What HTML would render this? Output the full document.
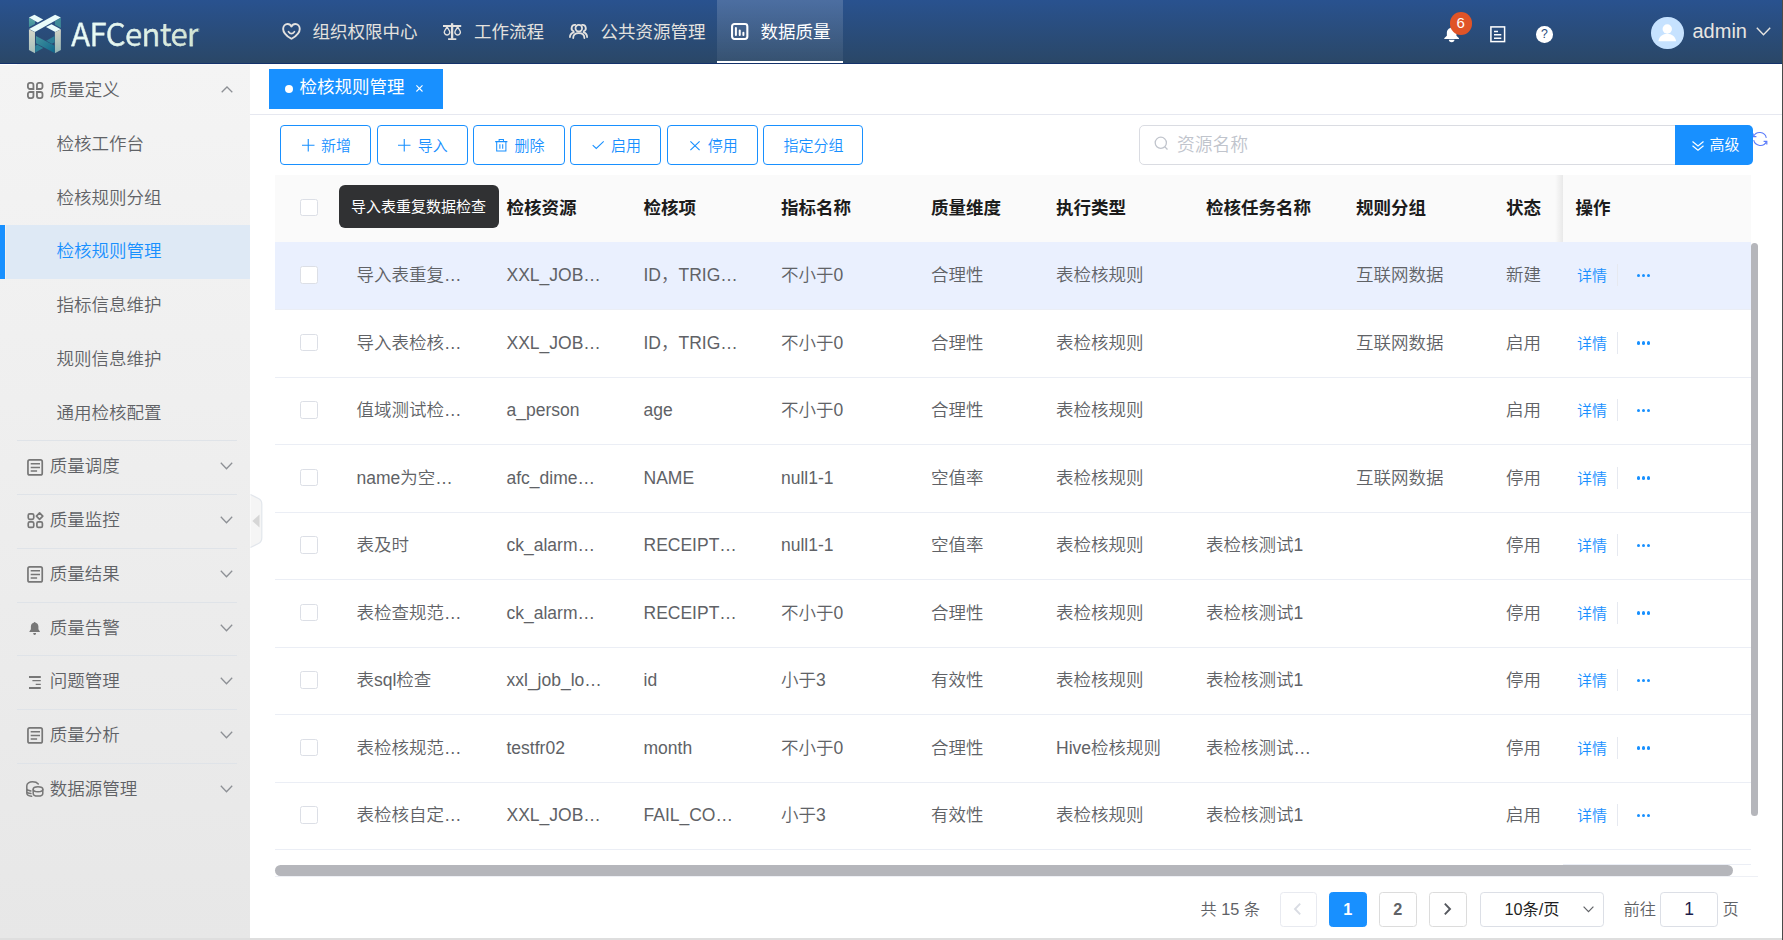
<!DOCTYPE html>
<html lang="zh-CN">
<head>
<meta charset="utf-8">
<title>AFCenter</title>
<style>
*{box-sizing:border-box;margin:0;padding:0}
html,body{width:1783px;height:940px;overflow:hidden;background:#fff}
body{position:relative;font-family:"Liberation Sans","Noto Sans CJK SC",sans-serif;font-size:17.5px;color:#606266;font-weight:350}
.abs{position:absolute}
svg{display:block;overflow:visible}
/* header */
#hd{position:absolute;left:0;top:0;width:1783px;height:64px;background:linear-gradient(#29528f,#2a4767);border-bottom:1px solid #14326b}
#logo{position:absolute;left:24px;top:10px;width:44px;height:48px}
#brand{position:absolute;left:71.2px;top:9px;font-family:"Noto Sans CJK SC","Liberation Sans",sans-serif;font-size:31.2px;line-height:48px;color:transparent;background:linear-gradient(90deg,#ecfdfa 0%,#e3f5ee 45%,#d3e3cd 100%);-webkit-background-clip:text;background-clip:text;letter-spacing:-.5px;white-space:nowrap;-webkit-text-stroke:.35px #e2f2ea}
.nav{position:absolute;top:0;height:63px;color:#e4e2df;font-size:17.5px;line-height:65px;white-space:nowrap;font-weight:400}
.nav svg{position:absolute}
.nav span{position:absolute;top:0}
.nav.on{background:linear-gradient(rgba(255,255,255,.165),rgba(255,255,255,.06));color:#fff;border-bottom:2px solid #fff}
/* sidebar */
#sb{position:absolute;left:0;top:64px;width:250px;height:876px;background:linear-gradient(#f4f4f4,#e7e7e7);color:#606266}
.m1{position:absolute;left:0;width:250px;height:53.75px}
.m1 .t{position:absolute;left:49.7px;top:0;line-height:52px;font-size:17.5px;color:#606266;white-space:nowrap}
.m1 svg.ic{position:absolute;left:26.8px}
.m1 svg.ar{position:absolute;left:220px}
.m1 .ln{position:absolute;left:17px;width:220px;top:0;height:1px;background:#dfe3e8}
.m2{position:absolute;left:0;width:250px;height:53.75px;line-height:52px;padding-left:56.5px;font-size:17.5px;color:#606266;white-space:nowrap}
.m2.on{background:linear-gradient(90deg,#1890ff 0,#1890ff 5px,transparent 5px,transparent 6px,#dee9f5 6px);color:#1890ff}
/* main */
#tab{position:absolute;left:269px;top:69px;width:174px;height:40px;background:#1890ff;color:#fff;font-size:17.5px;line-height:37.6px;white-space:nowrap;font-weight:400}
.btn{position:absolute;top:125px;height:40px;border:1.25px solid #1890ff;border-radius:4px;background:#fff;color:#1890ff;font-size:15px;line-height:38px;white-space:nowrap}
.btn span{position:absolute;top:.7px}
.btn svg{position:absolute}
/* table */
#th{position:absolute;left:275px;top:175px;width:1476px;height:67px;background:#fafafa}
.h{position:absolute;top:0;line-height:67px;font-weight:bold;color:#1c1c1c;font-size:17.5px;white-space:nowrap}
.row{position:absolute;left:275px;width:1476px;height:67.5px;border-bottom:1px solid #ebeef5}
.ri{position:absolute;left:0;width:1476px;height:67.5px}
.row.hv{background:#eaf0fe}
.c{position:absolute;top:0;line-height:67px;font-size:17.5px;color:#606266;white-space:nowrap}
.cb{position:absolute;left:25.25px;width:17.5px;height:17.5px;border:1.25px solid #dcdfe6;border-radius:2.5px;background:#fff}
.lk{position:absolute;left:1302px;top:0;line-height:67px;font-size:15px;color:#1890ff}
.dv{position:absolute;left:1342px;top:22px;width:1px;height:22px;background:#e6e9f0}
.dots{position:absolute;left:1361.5px;top:31.8px;width:14px;height:3.4px}
.dots i{position:absolute;top:0;width:3.4px;height:3.4px;border-radius:50%;background:#1890ff}
/* pagination */
.pg{position:absolute;top:892px;height:35px;line-height:35px;font-size:16.25px;color:#606266;white-space:nowrap}
.pb{position:absolute;top:892px;height:35px;width:37.5px;border:1.25px solid #dcdcdc;border-radius:3.5px;background:#fff;text-align:center;line-height:33px;font-weight:bold;font-size:16.25px;color:#606266}
</style>
</head>
<body>
<div id="hd">
<svg id="logo" viewBox="0 0 862 940">
<defs>
<linearGradient id="gp" x1="0" y1="0" x2="0" y2="1"><stop offset="0" stop-color="#d7d7c9"/><stop offset="1" stop-color="#a6bfbc"/></linearGradient>
<linearGradient id="gp2" x1="0" y1="0" x2="0" y2="1"><stop offset="0" stop-color="#d2d3c5"/><stop offset="1" stop-color="#93b5b5"/></linearGradient>
<linearGradient id="gt" x1="0" y1="0" x2="1" y2="1"><stop offset="0" stop-color="#45949f"/><stop offset="1" stop-color="#0d668b"/></linearGradient>
<linearGradient id="gs" x1="0" y1="0" x2="0" y2="1"><stop offset="0" stop-color="#5aa7a8"/><stop offset="1" stop-color="#3f8d99"/></linearGradient>
</defs>
<polygon points="97,152 215,215 215,272 97,337" fill="url(#gs)"/>
<polygon points="722,152 605,215 605,290 722,352" fill="#3f8b98"/>
<polygon points="97,148 205,92 375,185 270,245" fill="#e9fbfa"/>
<polygon points="540,278 720,375 612,432 430,335" fill="#e9fbfa"/>
<polygon points="610,92 722,148 215,432 100,372" fill="#e9fbfa"/>
<polygon points="97,375 215,435 215,845 97,785" fill="url(#gp)"/>
<polygon points="605,435 722,378 722,785 605,845" fill="url(#gp2)"/>
<polygon points="600,508 600,632 545,662 435,600" fill="#2b7d96"/>
<polygon points="220,702 265,680 378,742 220,832" fill="#2d8199"/>
<polygon points="235,508 600,700 600,842 235,652" fill="url(#gt)"/>
</svg>
<div id="brand">AFCenter</div>

<div class="nav" style="left:270px;width:161px">
<svg style="left:12px;top:23px" width="19" height="17" viewBox="0 0 19 17" fill="none" stroke="#e4e2df" stroke-width="1.900" stroke-linecap="round" stroke-linejoin="round"><path d="M9.450 15.800C7.500 14.600 1.150 11.200 1.150 5.900 1.150 3.100 3.200.950 5.600.950 7.300.950 8.700 1.900 9.450 3.500 10.200 1.900 11.600.950 13.300.950 15.700.950 17.750 3.100 17.750 5.900 17.750 11.200 11.400 14.600 9.450 15.800z"/><path d="M6.500 8.700Q9.450 12.600 12.400 8.700" stroke-width="1.700"/></svg>
<span style="left:42.500px">组织权限中心</span></div>

<div class="nav" style="left:431px;width:126px">
<svg style="left:12.100px;top:23px" width="18.500" height="17" viewBox="0 0 18.500 17" fill="none" stroke="#e4e2df" stroke-linejoin="round"><path d="M9.100.200V15.800" stroke-width="2.300"/><path d="M0 3H18.200M5.100 16.100H13.300" stroke-width="1.800"/><path d="M4.050 3.900L1.600 8A2.750 2.750 0 1 0 6.500 8zM14.650 3.900L12.200 8A2.750 2.750 0 1 0 17.100 8z" stroke-width="1.400"/></svg>
<span style="left:43px">工作流程</span></div>

<div class="nav" style="left:557px;width:160px">
<svg style="left:12px;top:24px" width="19.600" height="15" viewBox="0 0 19.600 15" fill="none" stroke="#e4e2df" stroke-width="1.800" stroke-linecap="round" stroke-linejoin="round"><circle cx="9.800" cy="4.200" r="3.300"/><path d="M4.200 14C4.200 10.400 6.500 9.200 9.800 9.200S15.400 10.400 15.400 14"/><path d="M6.300.950A3.300 3.300 0 0 0 4.700 7.300M.950 13C1 10.700 2.500 9 4.800 8.300M13.100.950A3.300 3.300 0 0 1 14.700 7.300M18.100 13C18.050 10.700 16.700 9 14.600 8.300"/></svg>
<span style="left:43.500px">公共资源管理</span></div>

<div class="nav on" style="left:717px;width:126px">
<svg style="left:14.200px;top:23px" width="17.400" height="17" viewBox="0 0 17.400 17" fill="none" stroke="#fff" stroke-width="2.100" stroke-linejoin="round"><rect x="1.050" y="1.050" width="15.300" height="14.900" rx="2.400"/><path d="M4.900 4.900V11.900M8.750 7.400V11.900M12.400 9.800V11.900" stroke-width="2" stroke-linecap="round"/></svg>
<span style="left:43.500px">数据质量</span></div>

<!-- right tools -->
<svg class="abs" style="left:1443.700px;top:27.200px" width="15.300" height="15.300" viewBox="0 0 15.300 15.300" fill="#fff"><path d="M7.650 0c.6 0 1 .4 1.100.900 2.300.500 3.700 2.400 3.700 4.700v3.200l2.400 2.200c.4.400.2 1-.4 1H.850c-.6 0-.8-.6-.4-1l2.400-2.200V5.600c0-2.300 1.400-4.200 3.700-4.700.1-.5.5-.9 1.100-.9z"/><path d="M4.800 12.800h5.700c0 1.500-1.200 2.500-2.850 2.500S4.800 14.300 4.800 12.800z"/></svg>
<div class="abs" style="left:1449.500px;top:12px;width:22.500px;height:22.500px;border-radius:50%;background:#e05427;color:#fff;font-size:15px;line-height:21.5px;text-align:center">6</div>
<svg class="abs" style="left:1490px;top:26px" width="15.500" height="16.500" viewBox="0 0 15.500 16.500" fill="none" stroke="#fff" stroke-width="1.500"><rect x=".9" y=".9" width="13.700" height="14.700"/><path d="M4 5.400h4M4 8.800h7.300M4 12.200h7.300" stroke-width="1.500"/></svg>
<div class="abs" style="left:1536.200px;top:26px;width:16.600px;height:16.600px;border-radius:50%;background:#fff;color:#2a4a7a;font-size:12.300px;line-height:17.200px;text-align:center;font-weight:400">?</div>
<div class="abs" style="left:1651px;top:16.500px;width:32.500px;height:32.500px;border-radius:50%;background:#c6e2ff;overflow:hidden">
<svg width="32.500" height="32.500" viewBox="0 0 32.500 32.500" fill="#fff"><circle cx="16.250" cy="12" r="4.700"/><path d="M7.400 24.300c.8-4.700 4.200-7.500 8.850-7.500s8.050 2.800 8.850 7.500z"/></svg></div>
<div class="abs" style="left:1692.500px;top:16px;font-size:20px;line-height:30px;color:#e9e6e2">admin</div>
<svg class="abs" style="left:1756px;top:27px" width="15" height="9" viewBox="0 0 15 9" fill="none" stroke="#e9e6e2" stroke-width="1.400"><path d="M.8.800l6.700 6.900 6.700-6.900"/></svg>
</div>
<div id="sb"><div class="abs" style="left:0;top:0;width:17px;height:1px;background:#fff"></div><div class="abs" style="left:17px;top:0;width:233px;height:1px;background:#f8f8f8"></div>
<div class="m1" style="top:0;height:53.9px"><svg class="ic" style="top:17.8px" width="16.4" height="17" viewBox="0 0 16.4 17" fill="none" stroke="#777" stroke-width="1.8"><path d="M2.90 0.90H4.45A2.0 2.0 0 0 1 6.45 2.90V7.00H2.90A2.0 2.0 0 0 1 0.90 5.00V2.90A2.0 2.0 0 0 1 2.90 0.90zM11.95 0.90H13.50A2.0 2.0 0 0 1 15.50 2.90V5.00A2.0 2.0 0 0 1 13.50 7.00H9.95V2.90A2.0 2.0 0 0 1 11.95 0.90zM2.90 10.00H6.45V14.10A2.0 2.0 0 0 1 4.45 16.10H2.90A2.0 2.0 0 0 1 0.90 14.10V12.00A2.0 2.0 0 0 1 2.90 10.00zM9.95 10.00H13.50A2.0 2.0 0 0 1 15.50 12.00V14.10A2.0 2.0 0 0 1 13.50 16.10H11.95A2.0 2.0 0 0 1 9.95 14.10V10.00z"/></svg><div class="t" style="line-height:53.3px">质量定义</div><svg class="ar" style="top:22px;left:220.5px" width="12" height="7" viewBox="0 0 12 7" fill="none" stroke="#8d9095" stroke-width="1.3"><path d="M.7 6.300l5.300-5.300 5.300 5.300"/></svg></div>
<div class="m2" style="top:53.90px;height:53.75px;line-height:52.8px">检核工作台</div>
<div class="m2" style="top:107.65px;height:53.75px;line-height:52.8px">检核规则分组</div>
<div class="m2 on" style="top:161.40px;height:53.75px;line-height:52.8px"><i></i>检核规则管理</div>
<div class="m2" style="top:215.15px;height:53.75px;line-height:52.8px">指标信息维护</div>
<div class="m2" style="top:268.90px;height:53.75px;line-height:52.8px">规则信息维护</div>
<div class="m2" style="top:322.65px;height:53.75px;line-height:52.8px">通用检核配置</div>
<div class="m1" style="top:376.40px;height:53.75px"><div class="ln"></div><svg class="ic" style="top:18.6px" width="16.4" height="17" viewBox="0 0 16.4 17" fill="none" stroke="#777" stroke-width="1.7"><rect x=".95" y=".95" width="14.3" height="15" rx="1.8"/><path d="M3.700 4.800h9.300M3.700 8.400h9.300M3.700 12h6.400" stroke-width="1.500"/></svg><div class="t" style="line-height:52.5px">质量调度</div><svg class="ar" style="top:22px" width="13" height="8" viewBox="0 0 13 8" fill="none" stroke="#8d9095" stroke-width="1.3"><path d="M.8.800l5.700 5.900 5.700-5.900"/></svg></div>
<div class="m1" style="top:430.15px;height:53.75px"><div class="ln"></div><svg class="ic" style="top:18.2px" width="16.4" height="16.4" viewBox="0 0 16.4 16.4" fill="none" stroke="#777" stroke-width="1.7" stroke-linejoin="round"><rect x="1.25" y="1.85" width="5.5" height="5.5" rx="1.5"/><path d="M12.6 .95L15.8 4.15 12.6 7.35 9.4 4.150z"/><rect x="1.250" y="9.950" width="5.500" height="5.500" rx="1.500"/><rect x="9.900" y="9.950" width="5.500" height="5.500" rx="1.500"/></svg><div class="t" style="line-height:52.5px">质量监控</div><svg class="ar" style="top:22px" width="13" height="8" viewBox="0 0 13 8" fill="none" stroke="#8d9095" stroke-width="1.3"><path d="M.8.800l5.700 5.900 5.700-5.900"/></svg></div>
<div class="m1" style="top:483.90px;height:53.75px"><div class="ln"></div><svg class="ic" style="top:18.6px" width="16.4" height="17" viewBox="0 0 16.4 17" fill="none" stroke="#777" stroke-width="1.7"><rect x=".95" y=".95" width="14.3" height="15" rx="1.8"/><path d="M3.700 4.800h9.300M3.700 8.400h9.300M3.700 12h6.400" stroke-width="1.500"/></svg><div class="t" style="line-height:52.5px">质量结果</div><svg class="ar" style="top:22px" width="13" height="8" viewBox="0 0 13 8" fill="none" stroke="#8d9095" stroke-width="1.3"><path d="M.8.800l5.700 5.900 5.700-5.900"/></svg></div>
<div class="m1" style="top:537.65px;height:53.75px"><div class="ln"></div><svg class="ic" style="top:20.2px;left:29.3px" width="11.3" height="13.2" viewBox="0 0 11.5 13.5" fill="#777"><path d="M5.75 0c.5 0 .9.35.95.8 1.8.45 2.9 1.9 2.9 3.800v2.900l1.500 2.100c.2.300 0 .700-.4.700H.8c-.4 0-.6-.4-.4-.7l1.500-2.100V4.600c0-1.900 1.100-3.350 2.900-3.800.05-.45.45-.8.950-.8zM4.300 11.300h2.900c0 1.200-.600 2-1.450 2s-1.450-.8-1.450-2z"/></svg><div class="t" style="line-height:52.5px">质量告警</div><svg class="ar" style="top:22px" width="13" height="8" viewBox="0 0 13 8" fill="none" stroke="#8d9095" stroke-width="1.3"><path d="M.8.800l5.700 5.900 5.700-5.900"/></svg></div>
<div class="m1" style="top:591.40px;height:53.75px"><div class="ln"></div><svg class="ic" style="top:20.7px;left:29.1px" width="11.8" height="13" viewBox="0 0 11.8 13" fill="none" stroke="#777"><path d="M0 .95h11.800M0 12.050h11.800" stroke-width="1.900"/><path d="M3.400 4.550h8.400M6.700 8.350h5.100" stroke-width="1.300"/></svg><div class="t" style="line-height:52.5px">问题管理</div><svg class="ar" style="top:22px" width="13" height="8" viewBox="0 0 13 8" fill="none" stroke="#8d9095" stroke-width="1.3"><path d="M.8.800l5.700 5.900 5.700-5.900"/></svg></div>
<div class="m1" style="top:645.15px;height:53.75px"><div class="ln"></div><svg class="ic" style="top:17.9px" width="16.4" height="17" viewBox="0 0 16.4 17" fill="none" stroke="#777" stroke-width="1.7"><rect x=".95" y=".95" width="14.3" height="15" rx="1.8"/><path d="M3.700 4.800h9.300M3.700 8.400h9.300M3.700 12h6.400" stroke-width="1.500"/></svg><div class="t" style="line-height:52.5px">质量分析</div><svg class="ar" style="top:22px" width="13" height="8" viewBox="0 0 13 8" fill="none" stroke="#8d9095" stroke-width="1.3"><path d="M.8.800l5.700 5.900 5.700-5.900"/></svg></div>
<div class="m1" style="top:698.90px;height:53.75px"><div class="ln"></div><svg class="ic" style="top:18.2px;left:26.2px" width="17.6" height="16" viewBox="0 0 17.6 16" fill="none" stroke="#777" stroke-width="1.500" stroke-linecap="round"><path d="M.8 4.700C.8 2.200 3.500.800 6.500.800 9 .800 11.200 1.600 12.300 3M.8 4.700V12.300C.8 13.700 2.800 14.900 5.600 15.300M.8 7.300C.8 8.600 2.500 9.600 4.900 10M.8 9.900C.8 11.200 2.500 12.200 4.900 12.600"/><ellipse cx="12" cy="8.300" rx="4.800" ry="2.500"/><path d="M7.200 8.300V12.400C7.200 13.900 9.300 15 12 15S16.800 13.900 16.800 12.400V8.300"/></svg><div class="t" style="line-height:52.5px">数据源管理</div><svg class="ar" style="top:22px" width="13" height="8" viewBox="0 0 13 8" fill="none" stroke="#8d9095" stroke-width="1.3"><path d="M.8.800l5.700 5.900 5.700-5.900"/></svg></div>
</div>
<svg class="abs" style="left:249.5px;top:493px" width="14" height="56" viewBox="0 0 14 56"><path d="M.5 1.500 L8.500 5.500 Q11.800 7.200 11.800 11 V45 Q11.800 48.800 8.500 50.500 L.5 54.500" fill="#f5f5f5" stroke="#e2e6ec" stroke-width="1.200"/><path d="M2.300 28 L9.500 21.600 V34.400z" fill="#d6d6d6"/></svg>
<div class="abs" style="left:250px;top:113.5px;width:1533px;height:1.25px;background:#e6e8f0"></div>
<div id="tab"><i class="abs" style="left:15.700px;top:15.500px;width:8.500px;height:8.500px;border-radius:50%;background:#fff"></i><span class="abs" style="left:30.5px;top:0">检核规则管理</span><svg class="abs" style="left:147.300px;top:16px" width="6.900" height="6.900" viewBox="0 0 7 7" stroke="#fff" stroke-width="1.1" fill="none"><path d="M.4.400l6.200 6.200M6.600.400L.4 6.600"/></svg></div>
<div class="btn" style="left:280px;width:91px"><svg style="left:20.5px;top:12.5px" width="12.5" height="12.5" viewBox="0 0 12.5 12.5" stroke="#1890ff" stroke-width="1.1" fill="none"><path d="M6.250 0v12.500M0 6.250h12.500"/></svg><span style="left:40px">新增</span></div>
<div class="btn" style="left:377px;width:91px"><svg style="left:20.2px;top:12.5px" width="12.5" height="12.5" viewBox="0 0 12.5 12.5" stroke="#1890ff" stroke-width="1.1" fill="none"><path d="M6.250 0v12.500M0 6.250h12.500"/></svg><span style="left:39.8px">导入</span></div>
<div class="btn" style="left:473px;width:92px"><svg style="left:20.5px;top:12.500px" width="12.600" height="12.700" viewBox="0 0 13 13.500" stroke="#1890ff" stroke-width="1.100" fill="none"><path d="M0 2.800h13M4.200 2.800V.6h4.600v2.200M1.600 2.800v10h9.800v-10M5 5.500v5M8 5.500v5"/></svg><span style="left:40.5px">删除</span></div>
<div class="btn" style="left:570px;width:91px"><svg style="left:20.5px;top:15.300px" width="12.400" height="8" viewBox="0 0 12.500 8.500" stroke="#1890ff" stroke-width="1.150" fill="none"><path d="M.4 4.300l3.800 3.600L12.100.4"/></svg><span style="left:40px">启用</span></div>
<div class="btn" style="left:667px;width:91px"><svg style="left:21.5px;top:15px" width="10" height="9.500" viewBox="0 0 10 9.500" stroke="#1890ff" stroke-width="1.150" fill="none"><path d="M.4.400l9.200 8.700M9.600.400L.4 9.100"/></svg><span style="left:39.8px">停用</span></div>
<div class="btn" style="left:763px;width:100px"><span style="left:19.5px">指定分组</span></div>
<div class="abs" style="left:1139px;top:125px;width:537px;height:40px;border:1.25px solid #dadce2;border-radius:5px 0 0 5px;background:#fff"></div>
<svg class="abs" style="left:1154px;top:136px" width="15" height="15" viewBox="0 0 15 15" fill="none" stroke="#c0c4cc" stroke-width="1.300"><circle cx="6.800" cy="6.800" r="5.600"/><path d="M10.900 10.900l2.600 2.600"/></svg>
<div class="abs" style="left:1177px;top:125px;line-height:41px;font-size:17.8px;color:#c0c4cc">资源名称</div>
<svg class="abs" style="left:1752px;top:130.5px" width="16" height="16" viewBox="0 0 16 16" fill="none" stroke="#5b7cfa" stroke-width="1.100"><path d="M1.500 5.500A6.800 6.800 0 0 1 14.300 6.800M14.500 10.500A6.800 6.800 0 0 1 1.700 9.200"/><path d="M1.200 2.500v3.200h3.200M14.800 13.500v-3.200h-3.200" stroke-width="1.200"/></svg>
<div class="abs" style="left:1675px;top:125px;width:78px;height:40px;background:#1890ff;border-radius:0 5px 5px 0;color:#fff;font-size:15px;line-height:39px"><svg class="abs" style="left:17px;top:15.5px" width="12" height="10" viewBox="0 0 12 10" fill="none" stroke="#fff" stroke-width="1.200"><path d="M.5.500l5.500 4.500 5.500-4.500M.5 4.800l5.500 4.500 5.500-4.500"/></svg><span class="abs" style="left:34.500px;top:0">高级</span></div>
<div id="th"><div class="cb" style="top:23.500px"></div>
<div class="h" style="left:81.5px">规则名称</div>
<div class="h" style="left:231.5px">检核资源</div>
<div class="h" style="left:368.5px">检核项</div>
<div class="h" style="left:506px">指标名称</div>
<div class="h" style="left:656px">质量维度</div>
<div class="h" style="left:781px">执行类型</div>
<div class="h" style="left:931px">检核任务名称</div>
<div class="h" style="left:1081px">规则分组</div>
<div class="h" style="left:1231px">状态</div>
<div class="abs" style="left:1280px;top:0;width:8px;height:67px;background:linear-gradient(90deg,rgba(0,0,0,0),rgba(0,0,0,.07))"></div>
<div class="abs" style="left:1288px;top:0;width:188px;height:67px;background:#fafafa"></div><div class="h" style="left:1300.500px">操作</div></div>
<div class="row hv" style="top:242px;height:68px"><div class="ri" style="top:-0.0px"><div class="cb" style="top:24.300px"></div>
<div class="c" style="left:81.5px">导入表重复…</div>
<div class="c" style="left:231.5px">XXL_JOB…</div>
<div class="c" style="left:368.5px">ID，TRIG…</div>
<div class="c" style="left:506px">不小于0</div>
<div class="c" style="left:656px">合理性</div>
<div class="c" style="left:781px">表检核规则</div>
<div class="c" style="left:1081px">互联网数据</div>
<div class="c" style="left:1231px">新建</div>
<div class="lk">详情</div><div class="dv"></div><div class="dots"><i style="left:0"></i><i style="left:5px"></i><i style="left:10px"></i></div></div></div>
<div class="row" style="top:310px;height:68px"><div class="ri" style="top:-0.5px"><div class="cb" style="top:24.300px"></div>
<div class="c" style="left:81.5px">导入表检核…</div>
<div class="c" style="left:231.5px">XXL_JOB…</div>
<div class="c" style="left:368.5px">ID，TRIG…</div>
<div class="c" style="left:506px">不小于0</div>
<div class="c" style="left:656px">合理性</div>
<div class="c" style="left:781px">表检核规则</div>
<div class="c" style="left:1081px">互联网数据</div>
<div class="c" style="left:1231px">启用</div>
<div class="lk">详情</div><div class="dv"></div><div class="dots"><i style="left:0"></i><i style="left:5px"></i><i style="left:10px"></i></div></div></div>
<div class="row" style="top:378px;height:67px"><div class="ri" style="top:-1.0px"><div class="cb" style="top:24.300px"></div>
<div class="c" style="left:81.5px">值域测试检…</div>
<div class="c" style="left:231.5px">a_person</div>
<div class="c" style="left:368.5px">age</div>
<div class="c" style="left:506px">不小于0</div>
<div class="c" style="left:656px">合理性</div>
<div class="c" style="left:781px">表检核规则</div>
<div class="c" style="left:1231px">启用</div>
<div class="lk">详情</div><div class="dv"></div><div class="dots"><i style="left:0"></i><i style="left:5px"></i><i style="left:10px"></i></div></div></div>
<div class="row" style="top:445px;height:68px"><div class="ri" style="top:-0.5px"><div class="cb" style="top:24.300px"></div>
<div class="c" style="left:81.5px">name为空…</div>
<div class="c" style="left:231.5px">afc_dime…</div>
<div class="c" style="left:368.5px">NAME</div>
<div class="c" style="left:506px">null1-1</div>
<div class="c" style="left:656px">空值率</div>
<div class="c" style="left:781px">表检核规则</div>
<div class="c" style="left:1081px">互联网数据</div>
<div class="c" style="left:1231px">停用</div>
<div class="lk">详情</div><div class="dv"></div><div class="dots"><i style="left:0"></i><i style="left:5px"></i><i style="left:10px"></i></div></div></div>
<div class="row" style="top:513px;height:67px"><div class="ri" style="top:-1.0px"><div class="cb" style="top:24.300px"></div>
<div class="c" style="left:81.5px">表及时</div>
<div class="c" style="left:231.5px">ck_alarm…</div>
<div class="c" style="left:368.5px">RECEIPT…</div>
<div class="c" style="left:506px">null1-1</div>
<div class="c" style="left:656px">空值率</div>
<div class="c" style="left:781px">表检核规则</div>
<div class="c" style="left:931px">表检核测试1</div>
<div class="c" style="left:1231px">停用</div>
<div class="lk">详情</div><div class="dv"></div><div class="dots"><i style="left:0"></i><i style="left:5px"></i><i style="left:10px"></i></div></div></div>
<div class="row" style="top:580px;height:68px"><div class="ri" style="top:-0.5px"><div class="cb" style="top:24.300px"></div>
<div class="c" style="left:81.5px">表检查规范…</div>
<div class="c" style="left:231.5px">ck_alarm…</div>
<div class="c" style="left:368.5px">RECEIPT…</div>
<div class="c" style="left:506px">不小于0</div>
<div class="c" style="left:656px">合理性</div>
<div class="c" style="left:781px">表检核规则</div>
<div class="c" style="left:931px">表检核测试1</div>
<div class="c" style="left:1231px">停用</div>
<div class="lk">详情</div><div class="dv"></div><div class="dots"><i style="left:0"></i><i style="left:5px"></i><i style="left:10px"></i></div></div></div>
<div class="row" style="top:648px;height:67px"><div class="ri" style="top:-1.0px"><div class="cb" style="top:24.300px"></div>
<div class="c" style="left:81.5px">表sql检查</div>
<div class="c" style="left:231.5px">xxl_job_lo…</div>
<div class="c" style="left:368.5px">id</div>
<div class="c" style="left:506px">小于3</div>
<div class="c" style="left:656px">有效性</div>
<div class="c" style="left:781px">表检核规则</div>
<div class="c" style="left:931px">表检核测试1</div>
<div class="c" style="left:1231px">停用</div>
<div class="lk">详情</div><div class="dv"></div><div class="dots"><i style="left:0"></i><i style="left:5px"></i><i style="left:10px"></i></div></div></div>
<div class="row" style="top:715px;height:68px"><div class="ri" style="top:-0.5px"><div class="cb" style="top:24.300px"></div>
<div class="c" style="left:81.5px">表检核规范…</div>
<div class="c" style="left:231.5px">testfr02</div>
<div class="c" style="left:368.5px">month</div>
<div class="c" style="left:506px">不小于0</div>
<div class="c" style="left:656px">合理性</div>
<div class="c" style="left:781px">Hive检核规则</div>
<div class="c" style="left:931px">表检核测试…</div>
<div class="c" style="left:1231px">停用</div>
<div class="lk">详情</div><div class="dv"></div><div class="dots"><i style="left:0"></i><i style="left:5px"></i><i style="left:10px"></i></div></div></div>
<div class="row" style="top:783px;height:67px"><div class="ri" style="top:-1.0px"><div class="cb" style="top:24.300px"></div>
<div class="c" style="left:81.5px">表检核自定…</div>
<div class="c" style="left:231.5px">XXL_JOB…</div>
<div class="c" style="left:368.5px">FAIL_CO…</div>
<div class="c" style="left:506px">小于3</div>
<div class="c" style="left:656px">有效性</div>
<div class="c" style="left:781px">表检核规则</div>
<div class="c" style="left:931px">表检核测试1</div>
<div class="c" style="left:1231px">启用</div>
<div class="lk">详情</div><div class="dv"></div><div class="dots"><i style="left:0"></i><i style="left:5px"></i><i style="left:10px"></i></div></div></div>
<div class="abs" style="left:1563px;top:864px;width:188px;height:1px;background:#ebeef5"></div>
<div class="abs" style="left:275px;top:876px;width:1483px;height:1px;background:#eef0f5"></div>
<div class="abs" style="left:275px;top:865px;width:1458px;height:11px;border-radius:5.500px;background:#b5b6bb"></div>
<div class="abs" style="left:1751px;top:242.500px;width:7px;height:573px;border-radius:3.500px;background:#b5b6bb"></div>
<div class="pg" style="left:1200.500px">共 15 条</div>
<div class="pb" style="left:1279.500px;border-color:#e8eaf0"><svg class="abs" style="left:13px;top:10.300px" width="7" height="12" viewBox="0 0 7 12" fill="none" stroke="#d9dce3" stroke-width="1.900"><path d="M6.200.700L1 6l5.200 5.300"/></svg></div>
<div class="pb" style="left:1329px;background:#1890ff;border-color:#1890ff;color:#fff">1</div>
<div class="pb" style="left:1379px">2</div>
<div class="pb" style="left:1429px"><svg class="abs" style="left:14px;top:10.300px" width="7" height="12" viewBox="0 0 7 12" fill="none" stroke="#55585e" stroke-width="1.900"><path d="M.8.700L6 6 .8 11.300"/></svg></div>
<div class="abs" style="left:1479.500px;top:892px;width:124.500px;height:35px;border:1.250px solid #dcdfe6;border-radius:3.750px"></div>
<div class="pg" style="left:1504.500px;color:#1f1f1f;font-weight:400">10条/页</div>
<svg class="abs" style="left:1582.500px;top:906px" width="11" height="7" viewBox="0 0 11 7" fill="none" stroke="#606266" stroke-width="1.200"><path d="M.6.600l4.900 5 4.900-5"/></svg>
<div class="pg" style="left:1623.500px">前往</div>
<div class="abs" style="left:1660px;top:892px;width:58px;height:35px;border:1.250px solid #dcdfe6;border-radius:3.750px;text-align:center;line-height:32px;font-size:17.500px;color:#1d1d4a">1</div>
<div class="pg" style="left:1722.500px">页</div>
<div class="abs" style="left:339px;top:185px;width:160px;height:43px;border-radius:6px;background:#303133;color:#fff;font-size:15px;line-height:44px;padding-left:12px;white-space:nowrap;font-weight:400">导入表重复数据检查</div>
<div class="abs" style="left:0;top:938px;width:1783px;height:2px;background:#dedede"></div>
<div class="abs" style="left:1782px;top:0;width:1px;height:940px;background:#4a4a4a"></div>
</body></html>
